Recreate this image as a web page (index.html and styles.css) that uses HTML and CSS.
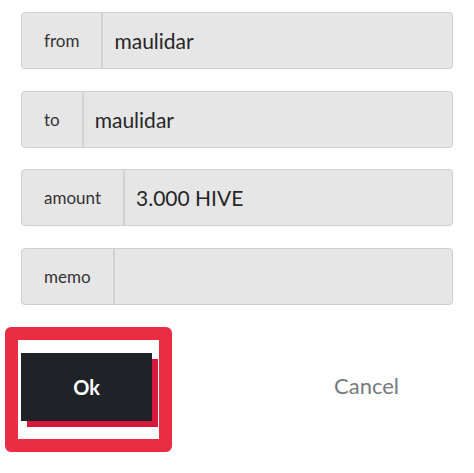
FILE: index.html
```html
<!DOCTYPE html>
<html>
<head>
<meta charset="utf-8">
<link rel="stylesheet" href="styles.css">
</head>
<body>
<div class="form">
  <div class="row"><div class="label">from</div><div class="value">maulidar</div></div>
  <div class="row"><div class="label">to</div><div class="value">maulidar</div></div>
  <div class="row"><div class="label">amount</div><div class="value">3.000 HIVE</div></div>
  <div class="row"><div class="label">memo</div><div class="value"></div></div>
</div>
<div class="actions">
  <div class="okwrap"><div class="ok">Ok</div></div>
  <div class="cancel">Cancel</div>
</div>
</body>
</html>
```
FILE: styles.css
```css
html, body { margin: 0; padding: 0; background: #fff; }
body { font-family: Lato, "Noto Sans", sans-serif; width: 474px; height: 473px; overflow: hidden; }
.form { padding: 12px 21px 0 21px; display: flex; flex-direction: column; gap: 21.5px; }
.row { display: flex; height: 57px; box-sizing: border-box; border: 1px solid #cfcfcf; border-radius: 4px; background: #e6e6e6; width: 432px; }
.label { padding: 0 22px; display: flex; align-items: center; font-size: 17px; color: #333; border-right: 2px solid #d2d2d2; }
.value { flex: 1; padding: 0 11px; display: flex; align-items: center; font-size: 21px; color: #262626; }
.actions { display: flex; align-items: center; margin-top: 22.5px; padding-left: 5px; }
.okwrap { border: 13px solid #e82d44; border-radius: 6px; padding: 13px 7px 18px 3px; background: #fff; }
.ok { width: 131px; height: 68px; background: #1f2327; color: #fff; font-weight: 700; font-size: 20px; display: flex; align-items: center; justify-content: center; box-shadow: 6px 6px 0 #d8183b; }
.cancel { margin-left: 162px; margin-bottom: 8px; font-size: 22px; color: #757b80; }
```
